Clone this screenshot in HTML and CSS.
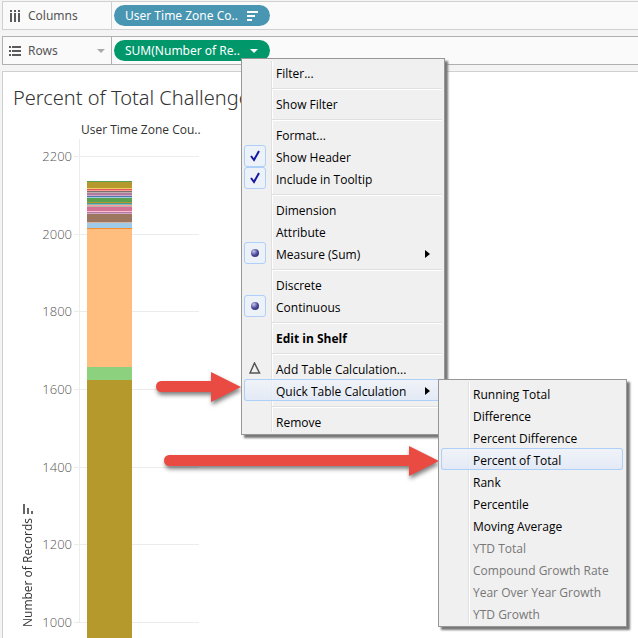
FILE: index.html
```html
<!DOCTYPE html>
<html lang="en">
<head>
<meta charset="utf-8">
<meta name="viewport" content="width=device-width, initial-scale=1">
<title>Percent of Total Challenges</title>
<link rel="stylesheet" href="styles.css">
</head>
<body>
<main class="workspace">
  <section class="shelf">
    <div class="shelf-label">
      <svg class="shelf-icon" width="12" height="12" viewBox="0 0 12 12"><path d="M1 0h2v2H1zM5 0h2v2H5zM9 0h2v2H9zM1 3h2v9H1zM5 3h2v9H5zM9 3h2v9H9z" fill="#5a5a5a"/></svg>
      <span>Columns</span>
    </div>
    <button class="pill pill-blue" type="button"><span>User Time Zone Co..</span>
      <svg width="11" height="10" viewBox="0 0 11 10"><path d="M0 0h11v2H0zM0 4h8v2H0zM0 8h5v2H0z" fill="#fff"/></svg>
    </button>
  </section>
  <section class="shelf shelf-active">
    <div class="shelf-label">
      <svg class="shelf-icon" width="12" height="10" viewBox="0 0 12 10"><path d="M0 0h2v2H0zM3 0h9v2H3zM0 4h2v2H0zM3 4h9v2H3zM0 8h2v2H0zM3 8h9v2H3z" fill="#5a5a5a"/></svg>
      <span>Rows</span>
      <svg class="caret" width="8" height="4" viewBox="0 0 8 4"><path d="M0 0h8L4 4z" fill="#aaa"/></svg>
    </div>
    <button class="pill pill-green" type="button"><span>SUM(Number of Re..</span>
      <svg width="8" height="4" viewBox="0 0 8 4"><path d="M0 0h8L4 4z" fill="#fff"/></svg>
    </button>
  </section>
  <section class="sheet">
    <h1>Percent of Total Challenges</h1>
    <div class="chart">
      <div class="axis-title"><span>Number of Records</span>
        <svg width="10" height="10" viewBox="0 0 10 10"><path d="M0 0h10v2H0zM0 4h6v2H0zM0 8h3v2H0z" fill="#666"/></svg>
      </div>
      <ul class="ticks"><li>2200</li><li>2000</li><li>1800</li><li>1600</li><li>1400</li><li>1200</li><li>1000</li></ul>
      <div class="plot">
        <h2>User Time Zone Cou..</h2>
        <div class="pane">
          <div class="lines"><i></i><i></i><i></i><i></i><i></i><i></i><i></i></div>
          <svg class="bar" width="45" height="457" viewBox="0 0 45 457" shape-rendering="crispEdges">
            <rect width="45" height="457" fill="#b6992d"/>
            <path fill="#59a14f" d="M0 0h45v1H0zM0 17h45v4H0z"/>
            <path fill="#f1ce63" d="M0 7h45v1H0z"/>
            <path fill="#e15759" d="M0 8h45v1H0z"/>
            <path fill="#ff9d9a" d="M0 9h45v1H0zM0 24h45v1H0z"/>
            <path fill="#79706e" d="M0 10h45v1H0z"/>
            <path fill="#bab0ac" d="M0 11h45v1H0zM0 25h45v1H0z"/>
            <path fill="#b07aa1" d="M0 12h45v2H0zM0 31h45v1H0z"/>
            <path fill="#d4a6c8" d="M0 14h45v1H0zM0 32h45v1H0z"/>
            <path fill="#4e79a7" d="M0 15h45v1H0z"/>
            <path fill="#a0cbe8" d="M0 16h45v1H0zM0 42h45v5H0z"/>
            <path fill="#499894" d="M0 22h45v1H0z"/>
            <path fill="#86bcb6" d="M0 23h45v1H0z"/>
            <path fill="#d37295" d="M0 26h45v4H0z"/>
            <path fill="#fabfd2" d="M0 30h45v1H0z"/>
            <path fill="#9d7660" d="M0 33h45v8H0z"/>
            <path fill="#d7b5a6" d="M0 41h45v1H0z"/>
            <path fill="#f28e2b" d="M0 47h45v1H0z"/>
            <path fill="#ffbe7d" d="M0 48h45v138H0z"/>
            <path fill="#8cd17d" d="M0 186h45v13H0z"/>
          </svg>
        </div>
      </div>
    </div>
  </section>
</main>

<svg class="arrow arrow-quick" width="92" height="42" viewBox="0 0 92 42"><path d="M11 11H61V2L91 17L61 32V22H11A5 5.500 0 0 1 11 11Z" fill="#e94b43"/></svg>

<menu class="menu menu-main">
  <li><button type="button">Filter...</button></li>
  <li class="separator"></li>
  <li><button type="button">Show Filter</button></li>
  <li class="separator"></li>
  <li><button type="button">Format...</button></li>
  <li><button type="button"><span class="mark"><svg width="10" height="12" viewBox="0 0 10 12"><path d="M1 6L4 10L9 1" fill="none" stroke="#1616a0" stroke-width="2"/></svg></span>Show Header</button></li>
  <li><button type="button"><span class="mark"><svg width="10" height="12" viewBox="0 0 10 12"><path d="M1 6L4 10L9 1" fill="none" stroke="#1616a0" stroke-width="2"/></svg></span>Include in Tooltip</button></li>
  <li class="separator"></li>
  <li><button type="button">Dimension</button></li>
  <li><button type="button">Attribute</button></li>
  <li><button type="button"><span class="mark"><i class="dot"></i></span>Measure (Sum)<svg class="more" width="5" height="8" viewBox="0 0 5 8"><path d="M0 0L5 4L0 8Z"/></svg></button></li>
  <li class="separator"></li>
  <li><button type="button">Discrete</button></li>
  <li><button type="button"><span class="mark"><i class="dot"></i></span>Continuous</button></li>
  <li class="separator"></li>
  <li><button class="strong" type="button">Edit in Shelf</button></li>
  <li class="separator"></li>
  <li><button type="button"><span class="mark plain"><svg width="12" height="12" viewBox="0 0 12 12"><path d="M5.500 1L10.500 11H1Z" fill="none" stroke="#555" stroke-width="1.500"/></svg></span>Add Table Calculation...</button></li>
  <li><button class="selected" type="button">Quick Table Calculation<svg class="more" width="5" height="8" viewBox="0 0 5 8"><path d="M0 0L5 4L0 8Z"/></svg></button></li>
  <li class="separator"></li>
  <li><button type="button">Remove</button></li>
</menu>

<svg class="arrow arrow-percent" width="282" height="42" viewBox="0 0 282 42"><path d="M11 11H251V2L281 17L251 32V22H11A5 5.500 0 0 1 11 11Z" fill="#e94b43"/></svg>

<menu class="menu menu-sub">
  <li><button type="button">Running Total</button></li>
  <li><button type="button">Difference</button></li>
  <li><button type="button">Percent Difference</button></li>
  <li><button class="selected" type="button">Percent of Total</button></li>
  <li><button type="button">Rank</button></li>
  <li><button type="button">Percentile</button></li>
  <li><button type="button">Moving Average</button></li>
  <li><button type="button" disabled>YTD Total</button></li>
  <li><button type="button" disabled>Compound Growth Rate</button></li>
  <li><button type="button" disabled>Year Over Year Growth</button></li>
  <li><button type="button" disabled>YTD Growth</button></li>
</menu>
</body>
</html>
```

FILE: styles.css
```css
* { box-sizing: border-box; }
html, body { height: 100%; }
body {
  margin: 0;
  position: relative;
  overflow: hidden;
  background: #f4f4f4;
  color: #333;
  font: 12px/16px "Open Sans", "Noto Sans", sans-serif;
}
button { font: inherit; border: 0; margin: 0; }
svg { display: block; flex: none; }

.workspace {
  height: 100%;
  display: flex;
  flex-direction: column;
  padding: 1px 0 0 2px;
}
.shelf {
  display: flex;
  align-items: center;
  flex: none;
  height: 29px;
  margin-bottom: 6px;
  background: #fafafa;
  border: 1px solid #d0d0d0;
  border-right: 0;
}
.shelf-active { border-color: #b0b0b0; }
.shelf-label {
  display: flex;
  align-items: center;
  align-self: stretch;
  width: 109px;
  padding: 0 6px;
  border-right: 1px solid #d0d0d0;
  color: #555;
  font-family: "Noto Sans", "Open Sans", sans-serif;
}
.shelf-active .shelf-label { border-color: #b0b0b0; }
.shelf-icon { margin-right: 7px; }
.caret { margin-left: auto; }
.pill {
  display: flex;
  align-items: center;
  justify-content: space-between;
  width: 156px;
  height: 21px;
  margin-left: 2px;
  padding: 0 12px 0 11px;
  border-radius: 11px;
  color: #fff;
  font-family: "Noto Sans", "Open Sans", sans-serif;
  white-space: nowrap;
}
.pill-blue { background: #4996b2; }
.pill-green { background: #00976b; }

.sheet {
  flex: 1;
  min-height: 0;
  display: flex;
  flex-direction: column;
  overflow: hidden;
  background: #fff;
  border: solid #d0d0d0;
  border-width: 1px 0 0 1px;
}
h1 {
  margin: 10px 0 0 10px;
  font: 300 20px/32px "Noto Sans", "Open Sans", sans-serif;
  white-space: nowrap;
}
.chart {
  display: flex;
  align-items: flex-start;
  flex: none;
  margin-top: 3px;
}
.axis-title {
  display: flex;
  align-items: center;
  gap: 4px;
  height: 510px;
  margin-left: 17px;
  writing-mode: vertical-rl;
  transform: rotate(180deg);
}
.axis-title svg { transform: rotate(90deg); }
.ticks {
  list-style: none;
  margin: 0 0 0 5px;
  padding: 0;
  width: 31px;
  height: 544px;
  display: flex;
  flex-direction: column;
  color: #555;
  font-size: 13px;
  font-weight: 300;
}
.ticks li { flex: 1; display: flex; align-items: center; justify-content: flex-end; }
.plot { margin-left: 2px; }
h2 {
  margin: 0 0 0 7px;
  padding-top: 5px;
  height: 22px;
  font: 12px/16px "Open Sans", "Noto Sans", sans-serif;
  white-space: nowrap;
}
.pane { display: grid; width: 125px; }
.pane > * { grid-area: 1 / 1; }
.lines {
  display: flex;
  flex-direction: column;
  justify-content: space-between;
  height: 484px;
  padding-top: 17px;
  background: linear-gradient(#ececec, #ececec) 5px 0 / 1px 100% no-repeat;
}
.lines i { height: 1px; background: #ececec; }
.bar { margin: 42px 0 0 13px; }

.menu {
  position: absolute;
  margin: 0;
  padding: 2px;
  list-style: none;
  border: 1px solid #979797;
  background:
    linear-gradient(90deg, #e0e0e0 50%, #fff 50%) 29px 2px / 2px calc(100% - 4px) no-repeat,
    #f0f0f0;
  box-shadow: 3px 3px 2px #777;
  color: #000;
}
.menu-main { left: 241px; top: 58px; width: 204px; }
.menu-sub { left: 438px; top: 379px; width: 189px; }
.menu button {
  position: relative;
  display: flex;
  align-items: center;
  width: 100%;
  height: 22px;
  padding: 3px 0 0 32px;
  background: none;
  color: inherit;
  white-space: nowrap;
}
.menu button:disabled { color: #777; }
.menu .strong { font-weight: 700; }
.menu .selected {
  background: linear-gradient(rgba(240, 244, 250, .8), rgba(224, 232, 247, .8));
  box-shadow: inset 0 0 0 1px #aecff7;
  border-radius: 3px;
}
.menu-sub button { width: calc(100% - 1px); }
.menu .separator {
  height: 9px;
  padding: 5px 0 2px 28px;
}
.separator::before {
  content: "";
  display: block;
  height: 2px;
  background: linear-gradient(#e0e0e0 50%, #fff 50%);
}
.mark {
  position: absolute;
  left: 0;
  top: 0;
  width: 22px;
  height: 22px;
  display: grid;
  place-items: center;
  border: 1px solid #aecff7;
  border-radius: 3px;
  background: #edf2f9;
}
.plain { border-color: transparent; background: none; }
.dot {
  width: 8px;
  height: 8px;
  border-radius: 50%;
  background: radial-gradient(circle at 35% 30%, #c4c4ee, #4a4a98 50%, #20205c);
}
.more { margin-left: auto; margin-right: 12px; margin-bottom: 2px; }
.arrow { position: absolute; filter: drop-shadow(1px 3px 2px rgba(0, 0, 0, .5)); }
.arrow-quick { left: 150px; top: 370px; }
.arrow-percent { left: 158px; top: 444px; }
```
